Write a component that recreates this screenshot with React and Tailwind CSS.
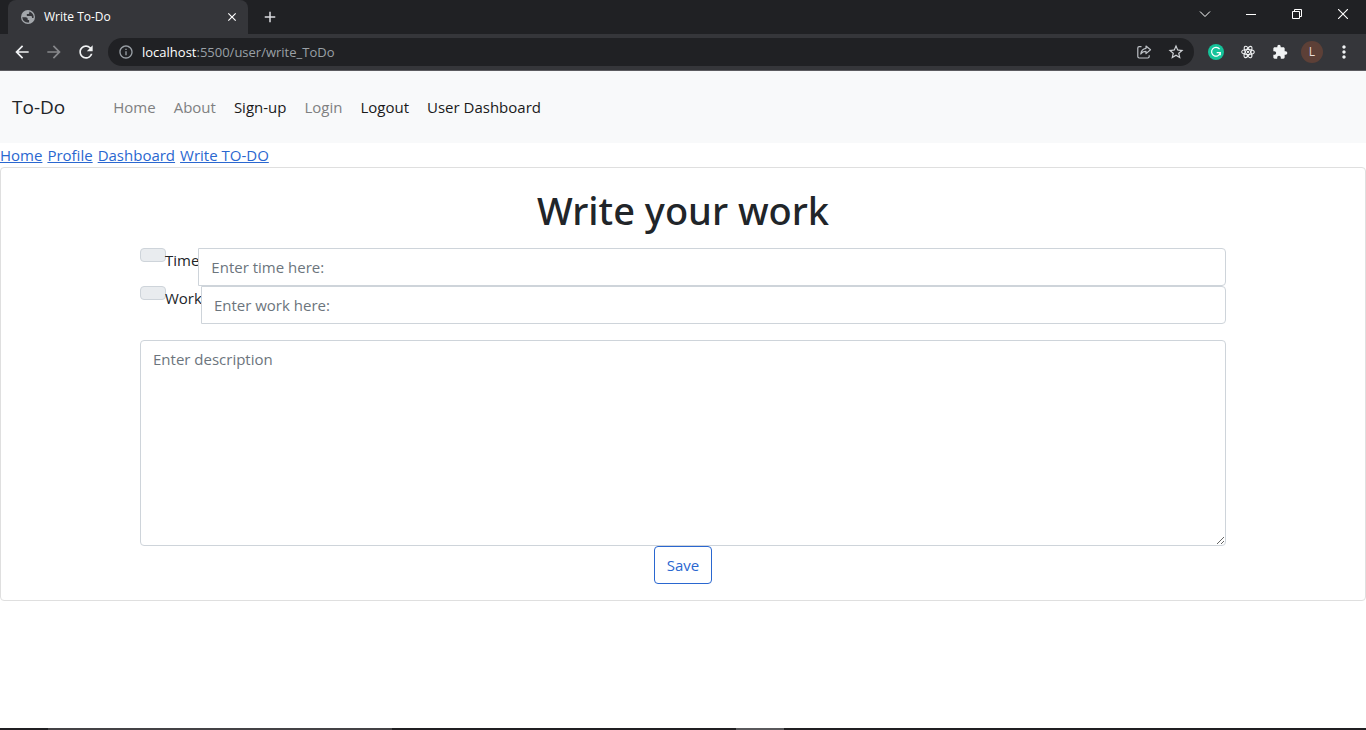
import React from "react";
import { MdExtension, MdArrowBack, MdArrowForward, MdRefresh, MdInfoOutline, MdStarBorder, MdMoreVert, MdClose, MdAdd } from "react-icons/md";

const iconButton = "flex size-8 shrink-0 items-center justify-center rounded-full";
const windowButton = "flex h-7 w-[46px] items-center justify-center text-white";

function TabStrip() {
  return (
    <div className="flex h-[34px] bg-[#202124] pl-2">
      <div className="flex w-60 items-center rounded-t-lg bg-[#35363a] pl-3 pr-2">
        <svg width="16" height="16" viewBox="0 0 16 16" fill="none">
          <circle cx="8" cy="8" r="7" fill="#a3a7ab" />
          <path d="M2.200 8.300h3.600c1.100 0 1.900.8 1.900 1.800v.9h1.400v2.400A5.700 5.700 0 0 1 2.200 8.300z" fill="#35363a" />
          <path d="M9.300 2.400v1.300c0 .8-.6 1.300-1.300 1.300H6.800v1.400c0 .4.300.6.700.6h3.200c.8 0 1.300.5 1.300 1.200v.9h1.600A5.800 5.800 0 0 0 9.300 2.400z" fill="#35363a" />
        </svg>
        <span className="ml-2 flex-1 text-[12px] leading-4 text-white">Write To-Do</span>
        <button aria-label="Close tab" className="flex size-4 items-center justify-center text-white">
          <MdClose className="size-3.5" />
        </button>
      </div>
      <button aria-label="New tab" className="ml-3 flex w-5 items-center justify-center text-[#dadce0]">
        <MdAdd className="size-[18px]" />
      </button>
      <div className="ml-auto flex">
        <button aria-label="Search tabs" className={windowButton}>
          <svg width="12" height="8" viewBox="0 0 12 8" fill="none" stroke="currentColor"><path d="M1 1.5l5 5 5-5" /></svg>
        </button>
        <button aria-label="Minimize" className={windowButton}>
          <svg width="10" height="10" viewBox="0 0 10 10" stroke="currentColor"><path d="M0 5.5h10" /></svg>
        </button>
        <button aria-label="Restore" className={windowButton}>
          <svg width="10" height="10" viewBox="0 0 10 10" fill="none" stroke="currentColor"><path d="M.5 2.5h7v7h-7zM2.500 2.500v-2h7v7h-2" /></svg>
        </button>
        <button aria-label="Close window" className={windowButton}>
          <svg width="10" height="10" viewBox="0 0 10 10" stroke="currentColor" strokeWidth="1.1"><path d="M0 0l10 10M10 0L0 10" /></svg>
        </button>
      </div>
    </div>
  );
}

function Toolbar() {
  return (
    <div className="flex h-[37px] items-center border-b border-[#5b5b5f] bg-[#35363a] pl-1.5 pr-1.5 text-[#f1f3f4]">
      <button aria-label="Back" className={iconButton}><MdArrowBack className="size-5" /></button>
      <button aria-label="Forward" className={iconButton + " text-[#87888b]"}><MdArrowForward className="size-5" /></button>
      <button aria-label="Reload" className={iconButton}><MdRefresh className="size-5" /></button>
      <div className="ml-1.5 flex h-7 flex-1 items-center rounded-full bg-[#202124] pl-2.5 pr-0.5 text-[#9aa0a6]">
        <MdInfoOutline className="size-4 shrink-0" />
        <span className="ml-2 flex-1 text-[13px] leading-5"><span className="text-white">localhost</span>:5500/user/write_ToDo</span>
        <button aria-label="Share" className={iconButton + " text-[#bdc1c6]"}>
          <svg width="16" height="16" viewBox="0 0 16 16" fill="none" stroke="currentColor" strokeWidth="1.200" strokeLinejoin="round">
            <path d="M5.500 2.600H3.200a1.400 1.400 0 0 0-1.400 1.400v8.600A1.400 1.400 0 0 0 3.200 14h8.600a1.400 1.400 0 0 0 1.400-1.400v-1.400" />
            <path d="M10 2l4.500 3.800L10 9.600V7.400c-2.600 0-4.100.9-5.200 2.600.3-3 2-5.200 5.200-5.700z" />
          </svg>
        </button>
        <button aria-label="Bookmark" className={iconButton + " text-[#d0d3d7]"}><MdStarBorder className="size-[18px]" /></button>
      </div>
      <div className="ml-1.5 flex">
        <button aria-label="Grammar" className={iconButton}>
          <svg width="16" height="16" viewBox="0 0 16 16" fill="none">
            <circle cx="8" cy="8" r="8" fill="#15c39a" />
            <path d="M11.600 5.200A4.400 4.400 0 1 0 12.300 8.700H8.700M12.300 8.700v2.500" stroke="#fff" strokeWidth="1.200" />
          </svg>
        </button>
        <button aria-label="React tools" className={iconButton}>
          <svg width="14" height="14" viewBox="0 0 16 16" fill="none" stroke="currentColor" strokeWidth="1.200">
            <ellipse cx="8" cy="8" rx="7.200" ry="2.800" />
            <ellipse cx="8" cy="8" rx="7.200" ry="2.800" transform="rotate(60 8 8)" />
            <ellipse cx="8" cy="8" rx="7.200" ry="2.800" transform="rotate(120 8 8)" />
            <circle cx="8" cy="8" r="1.300" fill="currentColor" stroke="none" />
          </svg>
        </button>
        <button aria-label="Extensions" className={iconButton}><MdExtension className="size-4" /></button>
        <button aria-label="Account" className={iconButton}>
          <span className="flex size-[22px] items-center justify-center rounded-full bg-[#5d4037] text-[12px] text-[#e8dcd8]">L</span>
        </button>
        <button aria-label="Menu" className={iconButton}><MdMoreVert className="size-5" /></button>
      </div>
    </div>
  );
}

const navItems = [
  { label: "Home", muted: true },
  { label: "About", muted: true },
  { label: "Sign-up", muted: false },
  { label: "Login", muted: true },
  { label: "Logout", muted: false },
  { label: "User Dashboard", muted: false },
];

const crumbs = ["Home", "Profile", "Dashboard", "Write TO-DO"];

function Field({ id, label, placeholder }) {
  return (
    <div className="flex items-start">
      <span className="-mr-px h-3.5 w-[26px] shrink-0 rounded border border-[#ced4da] bg-[#e9ecef]" />
      <label htmlFor={id} className="-mr-px leading-6">{label}</label>
      <input
        id={id}
        type="text"
        placeholder={placeholder}
        className="h-[38px] min-w-0 flex-1 rounded-r border border-[#ced4da] bg-white px-3 placeholder:text-[#6c757d]"
      />
    </div>
  );
}

export default function App() {
  return (
    <div className="flex min-h-screen flex-col bg-white font-['Open_Sans','Noto_Sans',sans-serif] text-[15px] leading-6 text-[#212529]">
      <header>
        <TabStrip />
        <Toolbar />
      </header>
      <nav className="flex h-[72px] items-center bg-[#f8f9fa] px-3">
        <a href="#" className="mr-10 text-[19px] leading-8">To-Do</a>
        <div className="flex gap-0.5">
          {navItems.map((item) => (
            <a key={item.label} href="#" className={item.muted ? "px-2 text-[#7f8081]" : "px-2 text-[#1a1a1a]"}>
              {item.label}
            </a>
          ))}
        </div>
      </nav>
      <div className="flex gap-[5px]">
        {crumbs.map((label) => (
          <a key={label} href="#" className="text-[#2a67d0] underline">{label}</a>
        ))}
      </div>
      <main className="flex-1">
        <form className="rounded border border-[#dfdfdf] px-[139px] py-4">
          <h1 className="mb-3 text-center font-['Noto_Sans','Open_Sans',sans-serif] text-[38px] font-medium leading-[52px]">Write your work</h1>
          <Field id="time" label="Time" placeholder="Enter time here:" />
          <Field id="work" label="Work" placeholder="Enter work here:" />
          <textarea
            aria-label="Description"
            placeholder="Enter description"
            className="mt-4 block h-[206px] w-full resize-y rounded border border-[#ced4da] px-3 py-1.5 placeholder:text-[#6c757d]"
          />
          <div className="flex justify-center">
            <button type="button" className="h-[38px] rounded border border-[#2a67d0] px-3 text-[#2a67d0]">Save</button>
          </div>
        </form>
      </main>
      <footer className="flex h-0.5 bg-[#201f22]">
        <div className="ml-12 w-[344px] bg-[#444346]" />
        <div className="ml-[344px] w-12 bg-[#5a595c]" />
      </footer>
    </div>
  );
}
